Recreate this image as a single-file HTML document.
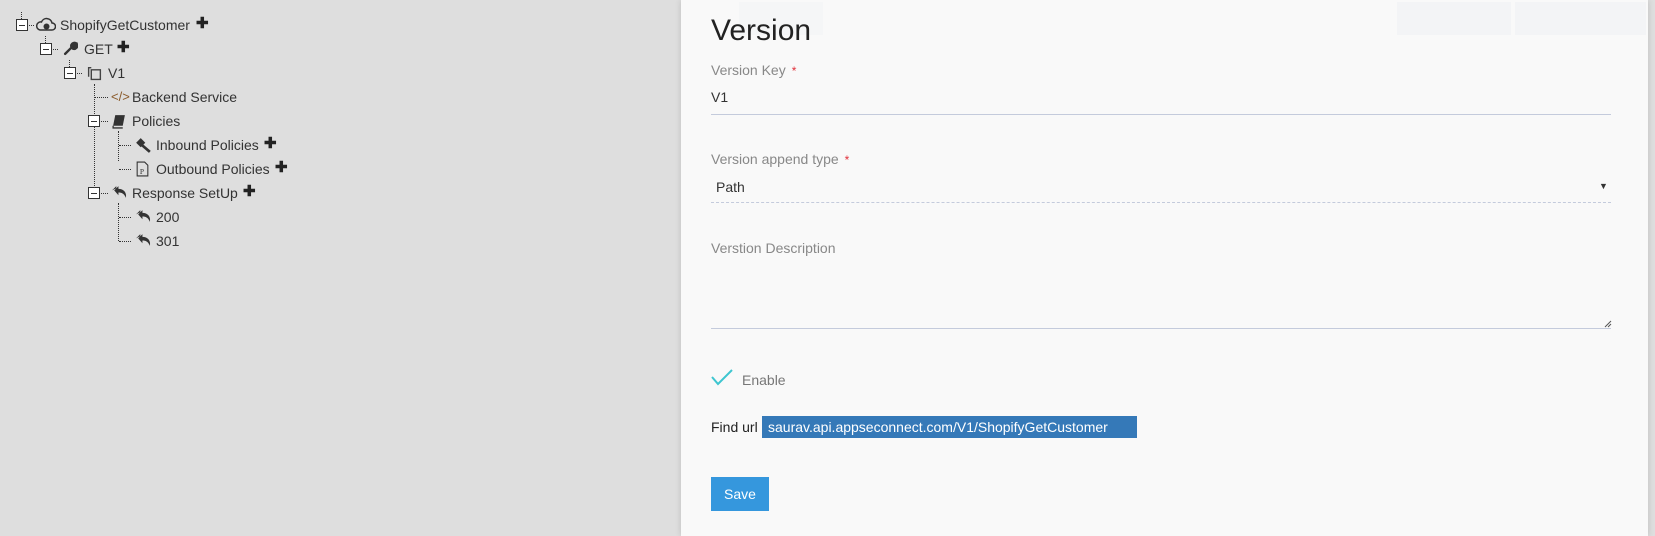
<!DOCTYPE html>
<html><head><meta charset="utf-8"><style>
*{margin:0;padding:0;box-sizing:border-box}
body{width:1655px;height:536px;background:#dedede;font-family:"Liberation Sans",Arial,sans-serif;position:relative;overflow:hidden}
.a{position:absolute}
.t{position:absolute;font-size:14px;color:#333;line-height:16px;white-space:nowrap}
.box{position:absolute;width:12px;height:12px;border:1px solid #333;background:#fff}
.box:after{content:"";position:absolute;left:2px;right:2px;top:5px;height:1px;background:#333}
.hd{position:absolute;height:0;border-top:1px dotted #333}
.vd{position:absolute;width:0;border-left:1px dotted #333}
.plus{position:absolute;font-weight:bold;font-size:15px;color:#222;line-height:16px}
.panel{position:absolute;left:681px;top:0;width:967px;height:536px;background:#f9f9f9;box-shadow:0 0 6px rgba(0,0,0,.15)}
.lbl{position:absolute;left:30px;font-size:14px;color:#888;white-space:nowrap}
.lbl b{color:#e0303a;font-weight:normal;font-size:12px;margin-left:6px}
.line{position:absolute;left:30px;width:900px;height:0;border-top:1px solid #c4cbdc}
</style></head><body>
<div class="vd" style="left:21px;top:12px;height:7px"></div>
<div class="box" style="left:16px;top:19px"></div>
<div class="hd" style="left:29px;top:25px;width:5px"></div>
<svg class="a" style="left:36px;top:16px" width="20" height="17" viewBox="0 0 20 17"><path d="M4 14 H16 A3.5 3.5 0 0 0 16 7 A5.5 5.5 0 0 0 5.5 6 A4 4 0 0 0 4 14 Z" fill="none" stroke="#333" stroke-width="1.5"/><circle cx="10.5" cy="10.5" r="3" fill="#333"/></svg>
<div class="t" style="left:60px;top:17px">ShopifyGetCustomer</div>
<div class="plus" style="left:196px;top:16px">✚</div>

<div class="vd" style="left:45px;top:36px;height:7px"></div>
<div class="box" style="left:40px;top:43px"></div>
<div class="hd" style="left:53px;top:49px;width:5px"></div>
<svg class="a" style="left:63px;top:41px" width="15" height="15" viewBox="0 0 14 14"><path d="M2 12 L8 6 M8 6 A3 3 0 0 1 12 2 L10 4 L11 5 L13 3 A3 3 0 0 1 9 7" stroke="#333" stroke-width="2.2" fill="#333" stroke-linecap="round"/></svg>
<div class="t" style="left:84px;top:41px">GET</div>
<div class="plus" style="left:117px;top:40px">✚</div>

<div class="vd" style="left:69px;top:60px;height:7px"></div>
<div class="box" style="left:64px;top:67px"></div>
<div class="hd" style="left:77px;top:73px;width:5px"></div>
<svg class="a" style="left:87px;top:65px" width="15" height="16" viewBox="0 0 14 15"><path d="M4 2.5 H1.5 V11 M4 4.5 H12.5 V13.5 H4 Z" fill="none" stroke="#444" stroke-width="1.3"/></svg>
<div class="t" style="left:108px;top:65px">V1</div>

<div class="vd" style="left:94px;top:84px;height:104px"></div>
<div class="hd" style="left:95px;top:97px;width:13px"></div>
<div class="t" style="left:111px;top:89px;color:#8a5a2a;font-size:13px">&lt;/&gt;</div>
<div class="t" style="left:132px;top:89px">Backend Service</div>

<div class="box" style="left:88px;top:115px"></div>
<div class="hd" style="left:101px;top:121px;width:7px"></div>
<svg class="a" style="left:112px;top:114px" width="14" height="15" viewBox="0 0 13 14"><path d="M3 1 H12 L10 11 H1 Z" fill="#333"/><path d="M1 11 L1 13 H10" stroke="#333" stroke-width="1.2" fill="none"/></svg>
<div class="t" style="left:132px;top:113px">Policies</div>

<div class="vd" style="left:118px;top:131px;height:30px"></div>
<div class="hd" style="left:119px;top:145px;width:12px"></div>
<svg class="a" style="left:135px;top:137px" width="16" height="16" viewBox="0 0 14 14"><path d="M1 5 L5 1 L9 5 L5 9 Z" fill="#333"/><path d="M6 7 L13 13" stroke="#333" stroke-width="2.4"/></svg>
<div class="t" style="left:156px;top:137px">Inbound Policies</div>
<div class="plus" style="left:264px;top:136px">✚</div>
<div class="hd" style="left:119px;top:169px;width:12px"></div>
<svg class="a" style="left:136px;top:161px" width="13" height="16" viewBox="0 0 12 15"><path d="M1 1 H8 L11 4 V14 H1 Z" fill="none" stroke="#333"/><text x="3.5" y="12" font-size="7" font-family="Liberation Serif" fill="#333">P</text></svg>
<div class="t" style="left:156px;top:161px">Outbound Policies</div>
<div class="plus" style="left:275px;top:160px">✚</div>

<div class="box" style="left:88px;top:187px"></div>
<div class="hd" style="left:101px;top:193px;width:7px"></div>
<svg class="a" style="left:111px;top:185px" width="17" height="14" viewBox="0 0 16 13"><path d="M1 5 L5 1 V3 M3 5 L7 1 V3.5 C12 3.5 15 7 14 12 C12.5 8 10 7 7 7 V9.5 Z" fill="#333"/></svg>
<div class="t" style="left:132px;top:185px">Response SetUp</div>
<div class="plus" style="left:243px;top:184px">✚</div>

<div class="vd" style="left:118px;top:203px;height:38px"></div>
<div class="hd" style="left:119px;top:217px;width:12px"></div>
<svg class="a" style="left:135px;top:209px" width="17" height="14" viewBox="0 0 16 13"><path d="M1 5 L5 1 V3 M3 5 L7 1 V3.5 C12 3.5 15 7 14 12 C12.5 8 10 7 7 7 V9.5 Z" fill="#333"/></svg>
<div class="t" style="left:156px;top:209px">200</div>
<div class="hd" style="left:119px;top:241px;width:12px"></div>
<svg class="a" style="left:135px;top:233px" width="17" height="14" viewBox="0 0 16 13"><path d="M1 5 L5 1 V3 M3 5 L7 1 V3.5 C12 3.5 15 7 14 12 C12.5 8 10 7 7 7 V9.5 Z" fill="#333"/></svg>
<div class="t" style="left:156px;top:233px">301</div>

<div class="panel">
  <div class="a" style="left:58px;top:2px;width:84px;height:33px;background:#f5f6f7"></div>
  <div class="a" style="left:716px;top:2px;width:114px;height:33px;background:#f3f4f6"></div>
  <div class="a" style="left:834px;top:2px;width:131px;height:33px;background:#f3f4f6"></div>
  <div class="a" style="left:30px;top:13px;font-size:30px;color:#222;line-height:36px">Version</div>
  <div class="lbl" style="top:62px">Version Key<b>*</b></div>
  <div class="a" style="left:30px;top:89px;font-size:14px;color:#333">V1</div>
  <div class="line" style="top:114px"></div>
  <div class="lbl" style="top:151px">Version append type<b>*</b></div>
  <div class="a" style="left:35px;top:179px;font-size:14px;color:#333">Path</div>
  <div class="a" style="left:918px;top:181px;font-size:9px;color:#333">▼</div>
  <div class="a" style="left:30px;top:202px;width:900px;border-top:1px dashed #c4cbdc"></div>
  <div class="lbl" style="top:240px">Verstion Description</div>
  <svg class="a" style="left:923px;top:320px" width="8" height="8"><path d="M1 7 L7 1 M4 7 L7 4" stroke="#555" stroke-width="1"/></svg>
  <div class="line" style="top:328px"></div>
  <svg class="a" style="left:30px;top:369px" width="23" height="17" viewBox="0 0 23 17"><path d="M1 8 L7 15 L21 1" fill="none" stroke="#3ec6d0" stroke-width="2"/></svg>
  <div class="a" style="left:61px;top:372px;font-size:14px;color:#777">Enable</div>
  <div class="a" style="left:30px;top:419px;font-size:14px;color:#222">Find url</div>
  <div class="a" style="left:81px;top:416px;width:375px;height:22px;background:#3579b8;color:#fff;font-size:14px;line-height:22px;padding-left:6px">saurav.api.appseconnect.com/V1/ShopifyGetCustomer</div>
  <div class="a" style="left:30px;top:477px;width:58px;height:34px;background:#3597dd;color:#fff;font-size:14px;line-height:34px;text-align:center">Save</div>
</div>
</body></html>
